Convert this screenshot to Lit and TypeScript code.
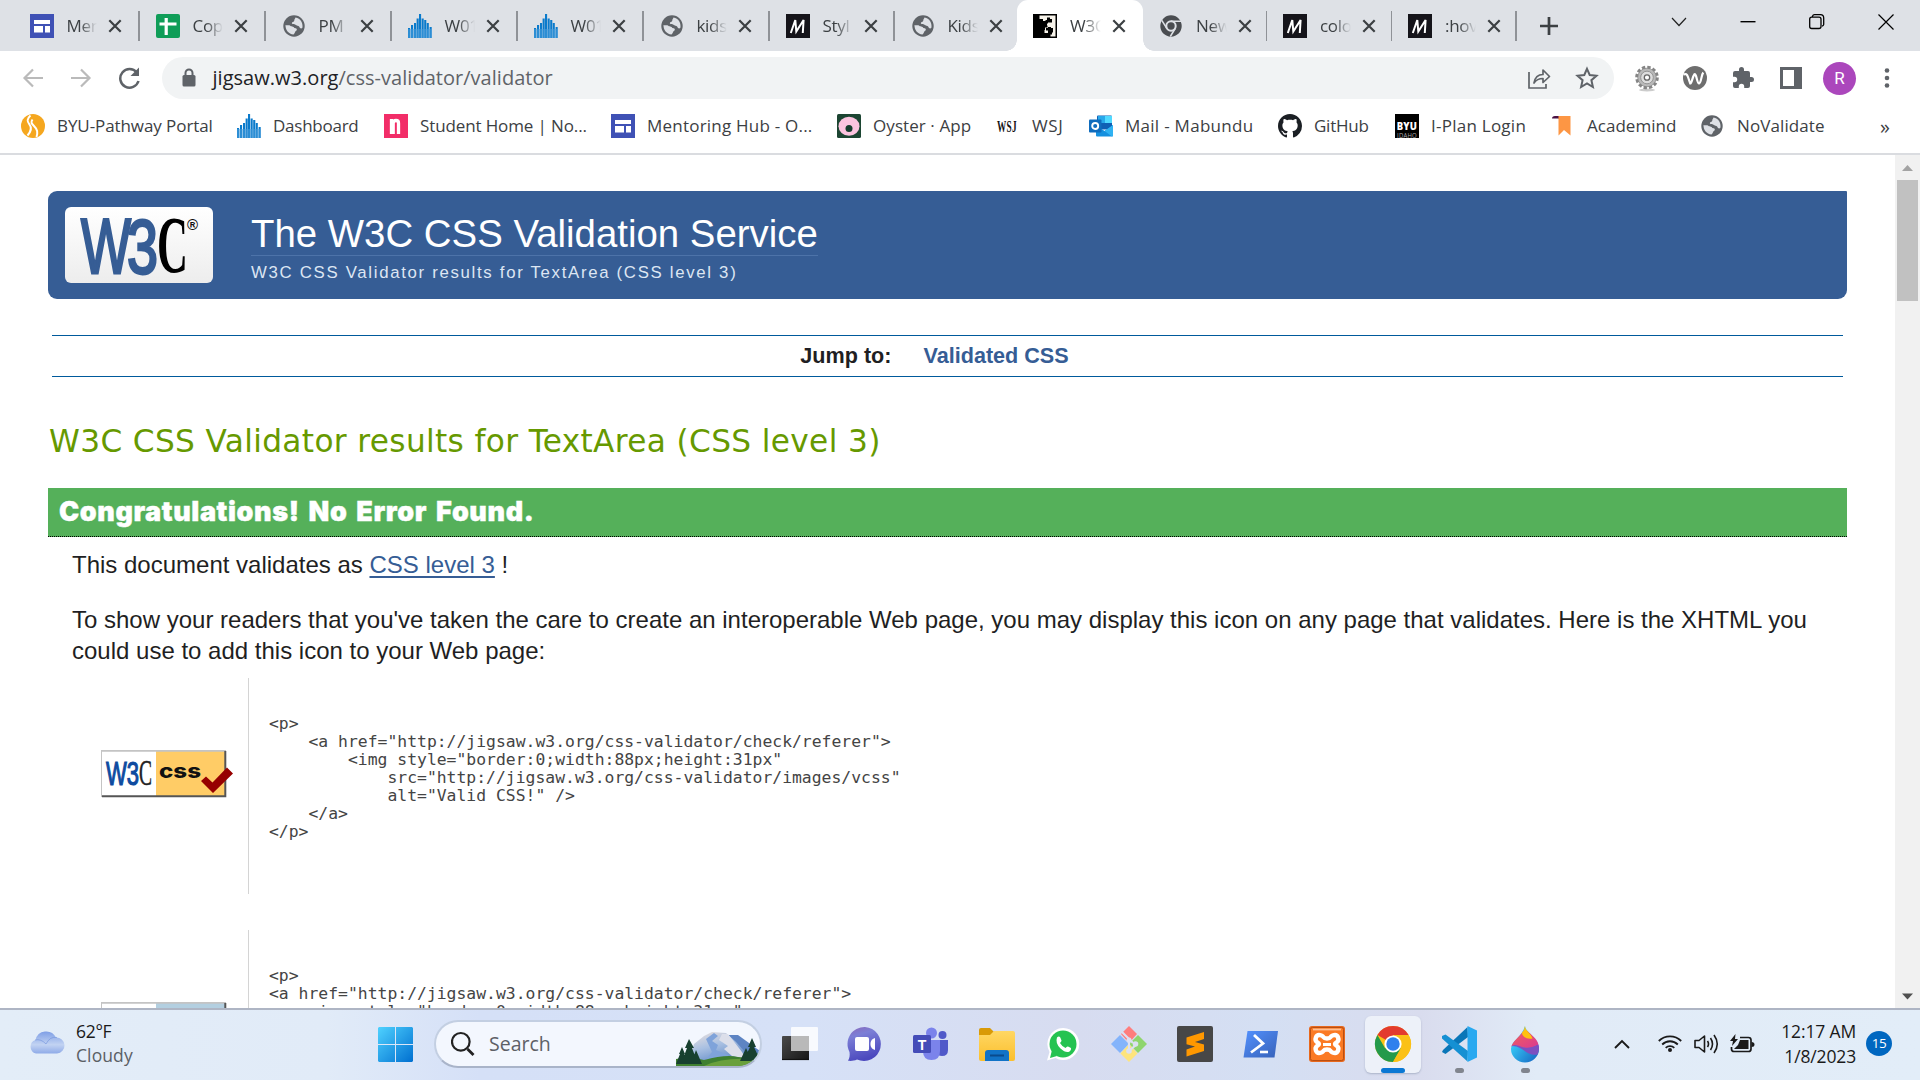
import { LitElement, html, svg, css, nothing } from "lit";
import { customElement, property } from "lit/decorators.js";

/* ---------- favicons, 24 x 24 ---------- */
const globe = svg`<circle cx="12" cy="12" r="10.700" fill="#5f6368"/><path d="M3.500 11C5 12 6 10.500 8 11.500C9 12.800 11.500 12 12.300 14C14.500 14 15.500 15 14.500 16.500C12.500 17.300 13.500 19 11.500 20.500C6.500 20 3.300 16 3.500 11Z" fill="#dee1e6"/><path d="M13.500 3.500C18.500 4.500 21 8.500 20.500 13.500C19.300 15.300 18 14.500 17.300 12.800C16.500 11.300 14.500 12 13.500 10.800C12.500 9.800 10.300 10.800 9.800 9.300C10 7.500 12 8.300 12.300 6.800C12 5.500 13 5 13.500 3.500Z" fill="#dee1e6"/>`;
const bars = svg`${[[0, 14], [3, 11], [6, 9], [8.600, 4.500], [11, 0], [13.600, 4.500], [16.200, 6], [18.700, 9], [21.600, 13]].map(
  ([x, y]) => svg`<rect x=${x} y=${y} width="2.100" height=${24 - y} fill="#0a7acb"/>`)}<rect x="0" y="15" width="24" height="9" fill="#4a9fdc" opacity=".55"/>`;
const siteIcon = svg`<rect width="24" height="24" fill="#3f51b5"/><rect x="4" y="6" width="16" height="4" fill="#fff"/><rect x="4" y="12" width="9" height="6.500" fill="#fff"/><rect x="15" y="12" width="5" height="6.500" fill="#fff"/>`;
const mdn = svg`<rect width="24" height="24" fill="#15141a"/><path d="M4.800 19L9.300 6L10.300 17.500L17.600 6L16.800 19" fill="none" stroke="#fff" stroke-width="2"/>`;

const icons: Record<string, unknown> = {
  globe, bars, mdn, site: siteIcon,
  sheet: svg`<rect width="24" height="24" rx="2" fill="#0f9d58"/><path d="M10.200 4v17M3.500 10h17" stroke="#fff" stroke-width="3.200"/>`,
  jigsaw: svg`<rect width="24" height="24" fill="#000"/><path d="M6.500 1.500H22.500V22.500H17.500V20.500H19V18.500H20V14H18V13H15V14H13V16.500H15V19H11.500V16H12V13.500H14.500V11.500H14V9.500H15V8.500H19V5H17V3.500H14V6H12.500V7H10V5H6.500Z" fill="#f7f3ea"/>`,
  chromeGrey: svg`<circle cx="12" cy="12" r="10.700" fill="#4a4d51"/><circle cx="12" cy="12" r="5.700" fill="#dee1e6"/><circle cx="12" cy="12" r="3.700" fill="#4a4d51"/><path d="M12 7.200H22M7.900 14.500L2.800 6.300M16.200 14.500L11.300 22.500" stroke="#dee1e6" stroke-width="1.500"/>`,
  pathway: svg`<circle cx="12" cy="12" r="12" fill="#f5a71f"/><path d="M9.500 1.500C5.500 5 6 7.500 8.500 10.500C11 13.800 10.500 17 6.500 21.500M11.500 5.500C9.500 8.500 10.500 9.500 13 12C16.500 15.500 17 18 15.500 23" fill="none" stroke="#fff" stroke-width="2"/>`,
  n: svg`<rect width="24" height="24" fill="#f22d68"/><path d="M7.500 20V5M14.500 20V9Q14.500 6.500 12 6.500Q9.500 6.500 9.200 9V20" fill="none" stroke="#fff" stroke-width="3.300"/>`,
  oyster: svg`<rect width="24" height="24" rx="1.500" fill="#1c4532"/><ellipse cx="12" cy="12.200" rx="10.500" ry="9.500" fill="#fbc4df"/><circle cx="12" cy="14.500" r="3.500" fill="#143c2c"/>`,
  wsj: svg`<text x="0" y="18" font-family="Liberation Serif" font-weight="700" font-size="17" textLength="20" lengthAdjust="spacingAndGlyphs" fill="#111">WSJ</text>`,
  outlook: svg`<rect x="8" y="1.500" width="15" height="14" rx="1" fill="#0f5fb4"/><rect x="9" y="2" width="7" height="7" fill="#28a8ea"/><rect x="16" y="2" width="7" height="7" fill="#50d9ff"/><path d="M7 11L15.500 17L24 11V21.500Q24 22.500 23 22.500H8Q7 22.500 7 21.500Z" fill="#1490df"/><path d="M24 11V21.500Q24 22.500 23 22.500L15.500 17Z" fill="#2fb2f2"/><rect x="0" y="5.500" width="12.500" height="13" rx="1" fill="#0f6cbd"/><circle cx="6.200" cy="12" r="3" fill="none" stroke="#fff" stroke-width="1.900"/>`,
  github: svg`<path transform="scale(1.500)" fill="#1b1f24" d="M8 0C3.580 0 0 3.580 0 8c0 3.540 2.290 6.530 5.470 7.590.4.070.55-.17.55-.38 0-.19-.01-.82-.01-1.490-2.010.37-2.530-.49-2.690-.94-.09-.23-.48-.94-.82-1.130-.28-.15-.68-.52-.01-.53.63-.01 1.080.58 1.230.82.72 1.210 1.870.87 2.330.66.070-.52.28-.87.51-1.070-1.780-.2-3.640-.89-3.640-3.950 0-.87.31-1.590.82-2.150-.08-.2-.36-1.020.08-2.120 0 0 .67-.21 2.200.82.64-.18 1.320-.27 2-.27s1.360.09 2 .27c1.530-1.040 2.200-.82 2.200-.82.44 1.100.16 1.920.08 2.120.51.56.82 1.270.82 2.150 0 3.070-1.870 3.750-3.650 3.950.29.25.54.73.54 1.480 0 1.070-.01 1.930-.01 2.200 0 .21.15.46.55.38A8.010 8.010 0 0 0 16 8c0-4.420-3.580-8-8-8z"/>`,
  byu: svg`<rect width="24" height="24" fill="#000"/><text x="1.700" y="15.500" font-family="Open Sans" font-weight="800" font-size="10.500" textLength="20.500" lengthAdjust="spacingAndGlyphs" fill="#fff">BYU</text><text x="2" y="24" font-family="Open Sans" font-size="7" textLength="20" lengthAdjust="spacingAndGlyphs" fill="#aaa">IDAHO</text>`,
  academind: svg`<path d="M5 2H18.500V21.500L12 16L6.500 21.500V5Z" fill="#fd9644"/><path d="M0 4.500Q0 2 3 2H6.500V4.500Z" fill="#4a1245"/>`,
};

interface Tab { icon: string; label: string; width: number; active?: boolean; noSep?: boolean; }
const tabs: Tab[] = [
  { icon: "site", label: "Men", width: 126 }, { icon: "sheet", label: "Cop", width: 126 }, { icon: "globe", label: "PM", width: 126 },
  { icon: "bars", label: "W01", width: 126 }, { icon: "bars", label: "W01", width: 126 }, { icon: "globe", label: "kids", width: 126 },
  { icon: "mdn", label: "Styl", width: 125 }, { icon: "globe", label: "Kids", width: 122.5, noSep: true }, { icon: "jigsaw", label: "W3C", width: 126, active: true },
  { icon: "chromeGrey", label: "New", width: 124 }, { icon: "mdn", label: "colo", width: 125 }, { icon: "mdn", label: ":hov", width: 124.5 },
];

/* label, icon, width of the whole entry up to the next icon, letter spacing, icon gap */
const bookmarks: [string, string, number, number, number][] = [
  ["BYU-Pathway Portal", "pathway", 216, -0.08, 12], ["Dashboard", "bars", 147, -0.25, 12], ["Student Home | No...", "n", 227, -0.12, 12],
  ["Mentoring Hub - O...", "site", 226, 0.22, 12], ["Oyster · App", "oyster", 160, 0.08, 12], ["WSJ", "wsj", 92, 0.6, 11],
  ["Mail - Mabundu", "outlook", 189, 0.28, 12], ["GitHub", "github", 117, -0.25, 12], ["I-Plan Login", "byu", 157, 0.25, 12],
  ["Academind", "academind", 148, 0.02, 11], ["NoValidate", "globe", 170, 0.1, 13],
];

@customElement("ui-icon")
class UiIcon extends LitElement {
  @property() name = "";
  static styles = css`:host{display:block;width:24px;height:24px;flex:none} svg{display:block;overflow:visible}`;
  render() { return html`<svg width="24" height="24" viewBox="0 0 24 24">${icons[this.name]}</svg>`; }
}

@customElement("browser-chrome")
class BrowserChrome extends LitElement {
  static styles = css`
    :host{display:block;font-family:"Open Sans","Noto Sans",sans-serif;font-size:17px;color:#3c4043}
    .strip{display:flex;height:51px;background:#dee1e6;padding-left:13.300px;box-sizing:border-box}
    .tab{box-sizing:border-box;display:flex;align-items:center;padding-left:16.700px;position:relative;flex:none}
    .tab::after{content:"";width:1.500px;height:30px;background:#8f9297;position:absolute;right:-.5px;top:11px}
    .tab.bare::after{display:none}
    .tab.active{background:#fff;border-radius:11px 11px 0 0}
    .tab.active::after{display:block;width:11px;height:11px;background:radial-gradient(circle at 100% 0,transparent 10.500px,#fff 11px);right:-11px;top:40px}
    .tab.active::before{content:"";position:absolute;width:11px;height:11px;left:-11px;top:40px;background:radial-gradient(circle at 0 0,transparent 10.500px,#fff 11px)}
    .label{margin-left:12.500px;width:31px;overflow:hidden;white-space:nowrap;line-height:26px;letter-spacing:-.3px;-webkit-mask-image:linear-gradient(90deg,#000 45%,transparent 100%)}
    .x{display:block;margin-left:11px;flex:none}
    .plus{display:block;margin:17px 0 0 24px}
    .win{margin-left:auto;display:flex;padding:13px 25.500px 0 0}
    .win svg{display:block;width:18px;height:18px;margin-left:51px}
    .bar{display:flex;height:54px;align-items:center;background:#fff;padding-left:20px}
    .nav{display:block;flex:none}
    .omni{flex:none;margin-left:20px;width:1452px;height:42px;border-radius:21px;background:#f1f3f4;display:flex;align-items:center;box-sizing:border-box;padding:0 15px 0 19px}
    .url{margin-left:15.500px;font-size:20px;color:#5f6368;line-height:30px;letter-spacing:.03px;flex:1}
    .url b{font-weight:400;color:#202124}
    .star{margin-left:24px}
    .ext{display:flex;align-items:center;padding-left:20px}
    .ext svg{display:block;flex:none}
    .ext .gap{margin-left:24px}
    .ext .wide{margin-left:25px}
    .ext .tight{margin-left:23px}
    .avatar{width:33px;height:33px;border-radius:50%;background:#ab47bc;color:#fff;display:grid;place-items:center;font:17px/33px Roboto,sans-serif;margin:0 28px 0 21px}
    .marks{display:flex;height:42px;padding:0 0 6px 21px;align-items:center;background:#fff;border-bottom:2px solid #dadce0}
    .mark{display:flex;align-items:center;flex:none}
    .mark span{white-space:nowrap;line-height:26px}
    .more{margin-left:10px;font-size:20px}
  `;
  render() {
    return html`
      <div class="strip">
        ${tabs.map((t) => html`<div class="tab ${t.active ? "active" : ""} ${t.noSep || t.active ? "bare" : ""}" style="width:${t.width}px">
          <ui-icon name=${t.icon}></ui-icon><span class="label">${t.label}</span>
          <svg class="x" width="14" height="14" viewBox="0 0 14 14"><path d="M1.300 1.300L12.700 12.700M12.700 1.300L1.300 12.700" stroke="#3c4043" stroke-width="2.200"/></svg>
        </div>`)}
        <svg class="plus" width="18" height="18" viewBox="0 0 18 18"><path d="M9 0V18M0 9H18" stroke="#3c4043" stroke-width="2.700"/></svg>
        <div class="win">
          <svg viewBox="0 0 18 18"><path d="M2 5L9 12.500L16 5" fill="none" stroke="#222" stroke-width="1.200"/></svg>
          <svg viewBox="0 0 18 18"><path d="M1.500 8.700H16.500" stroke="#000" stroke-width="1.400"/></svg>
          <svg viewBox="0 0 18 18"><rect x="1.700" y="4.200" width="11.300" height="11.300" rx="2" fill="none" stroke="#000" stroke-width="1.300"/><path d="M4.500 4V3.200Q5 1.700 6.500 1.700H12.500Q15.700 1.700 15.700 5V11.500Q15.500 13 14 13" fill="none" stroke="#000" stroke-width="1.300"/></svg>
          <svg viewBox="0 0 18 18"><path d="M1.500 1.500L16.500 16.500M16.500 1.500L1.500 16.500" stroke="#000" stroke-width="1.200"/></svg>
        </div>
      </div>
      <div class="bar">
        <svg class="nav" width="122" height="24" viewBox="0 0 122 24" fill="none" stroke="#bababa" stroke-width="2.200">
          <path d="M23 12H5M13 3.500L4.500 12L13 20.500M51 12H69M61 3.500L69.500 12L61 20.500"/>
          <path d="M116.800 6.500A9.300 9.300 0 1 0 118.500 15" stroke="#5f6368" stroke-width="2.500"/><path d="M119 1.500V10H110.500Z" fill="#5f6368" stroke="none"/>
        </svg>
        <div class="omni">
          <svg width="16" height="20" viewBox="0 0 16 20"><rect x="1.500" y="7" width="13" height="11.500" rx="1.500" fill="#5f6368"/><path d="M4.500 8V5a3.500 3.500 0 0 1 7 0V8" fill="none" stroke="#5f6368" stroke-width="2"/></svg>
          <span class="url"><b>jigsaw.w3.org</b>/css-validator/validator</span>
          <svg width="24" height="24" viewBox="0 0 24 24" fill="none" stroke="#5f6368" stroke-width="1.700"><path d="M2 6V22H19V18"/><path d="M7 17C8 11 11.500 8.500 16 8.500V4L22.500 10.500L16 16.500V12.500C12 12.500 9 14 7 17Z" stroke-linejoin="round"/></svg>
          <svg class="star" width="24" height="24" viewBox="0 0 24 24"><path d="M12 2.800L14.700 9L21.500 9.700L16.400 14.200L17.900 21L12 17.500L6.100 21L7.600 14.200L2.500 9.700L9.300 9Z" fill="none" stroke="#5f6368" stroke-width="2"/></svg>
        </div>
        <div class="ext">
          <svg width="26" height="30" viewBox="0 0 26 30"><ellipse cx="13" cy="27" rx="8" ry="1.500" fill="#ccc"/><circle cx="13" cy="14.500" r="10.300" fill="none" stroke="#858585" stroke-width="3" stroke-dasharray="3.300 2.090"/><circle cx="13" cy="14.500" r="9.300" fill="#b9b9b9" stroke="#808080" stroke-width=".7"/><circle cx="13" cy="14.500" r="6.300" fill="#ddd" stroke="#888" stroke-width=".8"/><circle cx="13" cy="14.500" r="2.700" fill="#fff" stroke="#666" stroke-width="1.300"/></svg>
          <svg class="tight" width="24" height="24" viewBox="0 0 24 24"><circle cx="12" cy="12" r="12" fill="#6e6e6e"/><path d="M.5 8.500C3 7.500 4 8 5 11L7.200 17.500C9 17.500 9.200 11 11.500 8.200C13.500 7.500 14 17.500 16 17.500C18.500 16.500 18.200 8.800 20.300 6.500" fill="none" stroke="#fff" stroke-width="2.200"/></svg>
          <svg class="gap" width="24" height="24" viewBox="0 0 24 24"><path fill="#5f6368" d="M20.500 11H19V7a2 2 0 0 0-2-2h-4V3.500a2.500 2.500 0 0 0-5 0V5H4a2 2 0 0 0-2 2v3.800h1.500a2.700 2.700 0 0 1 0 5.400H2V20a2 2 0 0 0 2 2h3.800v-1.500a2.700 2.700 0 0 1 5.400 0V22H17a2 2 0 0 0 2-2v-4h1.500a2.500 2.500 0 0 0 0-5z"/></svg>
          <svg class="wide" width="22" height="22" viewBox="0 0 22 22"><rect x="1.500" y="1.500" width="19" height="19" fill="#fff" stroke="#5f6368" stroke-width="3"/><rect x="14" y="0" width="8" height="22" fill="#5f6368"/></svg>
          <div class="avatar">R</div>
          <svg width="6" height="20" viewBox="0 0 6 20" fill="#5f6368"><circle cx="3" cy="2.500" r="2.300"/><circle cx="3" cy="10" r="2.300"/><circle cx="3" cy="17.500" r="2.300"/></svg>
        </div>
      </div>
      <div class="marks">
        ${bookmarks.map(([label, icon, w, ls, gap]) => html`<div class="mark" style="width:${w}px;letter-spacing:${ls}px;gap:${gap}px"><ui-icon name=${icon}></ui-icon><span>${label}</span></div>`)}
        <span class="more">»</span>
      </div>`;
  }
}

const snippet1 = `<p>
    <a href="http://jigsaw.w3.org/css-validator/check/referer">
        <img style="border:0;width:88px;height:31px"
            src="http://jigsaw.w3.org/css-validator/images/vcss"
            alt="Valid CSS!" />
    </a>
</p>`;
const snippet2 = `<p>
<a href="http://jigsaw.w3.org/css-validator/check/referer">
    <img style="border:0;width:88px;height:31px"`;

const plate = (fill: string) => svg`<rect x="0" y="0" width="125" height="47" fill="#fff"/><rect x="55" y="1" width="69" height="45" fill=${fill}/>
  <path d="M0 47V.7H125" fill="none" stroke="#c4c4c4" stroke-width="2"/><path d="M1 46.300H124.300V1" fill="none" stroke="#555" stroke-width="2"/>`;
const badge = () => html`<svg width="133" height="48" viewBox="0 0 133 48">${plate("#ffcc66")}
  <g font-family="Liberation Sans" font-size="34" stroke-width="1.200"><text x="5" y="35" fill="#0e4ba0" stroke="#0e4ba0" textLength="33" lengthAdjust="spacingAndGlyphs">W3</text><text x="38" y="35" fill="#222" stroke="#222" stroke-width=".5" font-family="Liberation Serif" font-size="36" textLength="13" lengthAdjust="spacingAndGlyphs">C</text></g>
  <text x="58" y="28" font-family="Inter" font-weight="800" font-size="20" textLength="42" lengthAdjust="spacingAndGlyphs" fill="#111">css</text>
  <path d="M100 31L105 26.500L111.500 32.500L126 17.500L132 23.500L112 43Z" fill="#960000"/></svg>`;
const badgeTop = () => html`<svg width="133" height="48" viewBox="0 0 133 48">${plate("#b3cfe0")}</svg>`;

@customElement("validator-page")
class ValidatorPage extends LitElement {
  static styles = css`
    :host{display:block;height:853px;overflow:hidden;background:#fff;font-family:"Liberation Sans",Arial,sans-serif;color:#1f1f23}
    .view{display:flex;height:853px}
    .doc{flex:1;padding:36px 48px 0;overflow:hidden;box-sizing:border-box}
    .banner{height:108px;background:#365d95;border-radius:9px 1px 9px 9px;display:flex;box-sizing:border-box;padding:16px 0 0 16.500px}
    .logo{width:148.500px;height:76px;border-radius:6px;background:linear-gradient(#fff,#ededed);flex:none}
    .logo svg{display:block}
    .heads{margin-left:38px;padding-top:2px}
    .title{font-size:38.400px;line-height:50px;color:#fff;border-bottom:1px solid #4d73a9;height:46px;white-space:nowrap}
    .sub{font-size:16.800px;line-height:20px;margin-top:7px;color:#dde6f3;letter-spacing:1.690px;white-space:nowrap}
    .jump{margin:36px 4px 0;height:42px;box-sizing:border-box;border-top:1px solid #005a9c;border-bottom:1px solid #005a9c;display:flex;justify-content:center;gap:32px;font-weight:700;font-size:21.600px;line-height:39px;padding-right:26px}
    .jump a{color:#365d95}
    h2{margin:44px 0 0 1px;height:67px;font:400 31.200px/40px "DejaVu Sans",sans-serif;color:#690;white-space:nowrap;letter-spacing:.35px}
    .ok{height:49px;box-sizing:border-box;background:#55b05a;border-bottom:1px dotted #000;color:#fff;font:900 27px/48px Inter,sans-serif;letter-spacing:.6px;word-spacing:3px;padding-left:11px;-webkit-text-stroke:.4px #fff}
    p{margin:12px 24px 0;font-size:24px;line-height:31px}
    p + p{margin-top:24px}
    p a{color:#365d95;text-decoration:underline;text-decoration-thickness:2px;text-underline-offset:3px}
    .row{display:flex;margin-top:12px;height:216px}
    .row + .row{margin-top:36px}
    .pic{width:147px;padding:72px 0 0 53px;flex:none}
    .pic svg{display:block}
    pre{margin:0;border-left:1px solid #d4d4d4;padding:37px 0 0 20px;font:16.400px/18px "DejaVu Sans Mono",monospace;color:#444;box-sizing:border-box}
    .scroll{width:25px;background:#f1f1f1;display:flex;flex-direction:column;align-items:center}
    .thumb{width:21px;height:121px;background:#c1c1c1;margin-bottom:auto}
    .scroll svg{display:block}
  `;
  render() {
    return html`<div class="view"><div class="doc">
      <div class="banner">
        <div class="logo"><svg width="149" height="76" viewBox="0 0 149 76">
          <text x="16" y="66" font-family="Liberation Sans" font-size="78" fill="#365d95" stroke="#365d95" stroke-width="2.800" textLength="50" lengthAdjust="spacingAndGlyphs">W</text>
          <text x="62" y="65.500" font-family="Liberation Sans" font-size="76" fill="#365d95" stroke="#365d95" stroke-width="2.800" textLength="31" lengthAdjust="spacingAndGlyphs">3</text>
          <text x="92" y="65" font-family="Liberation Serif" font-weight="700" font-size="80" textLength="31" lengthAdjust="spacingAndGlyphs" fill="#000">C</text>
          <text x="122" y="23" font-size="15" font-weight="700" fill="#111" font-family="Liberation Sans">®</text></svg></div>
        <div class="heads"><div class="title">The W3C CSS Validation Service</div><div class="sub">W3C CSS Validator results for TextArea (CSS level 3)</div></div>
      </div>
      <div class="jump"><span>Jump to:</span><a>Validated CSS</a></div>
      <h2>W3C CSS Validator results for TextArea (CSS level 3)</h2>
      <div class="ok">Congratulations! No Error Found.</div>
      <p>This document validates as <a>CSS level 3</a> !</p>
      <p>To show your readers that you've taken the care to create an interoperable Web page, you may display this icon on any page that validates. Here is the XHTML you could use to add this icon to your Web page:</p>
      <div class="row"><div class="pic">${badge()}</div><pre>${snippet1}</pre></div>
      <div class="row"><div class="pic">${badgeTop()}</div><pre>${snippet2}</pre></div>
    </div>
    <div class="scroll">
      <svg width="25" height="25" viewBox="0 0 25 25"><path d="M7 16L12.500 10L18 16Z" fill="#a3a3a3"/></svg>
      <div class="thumb"></div>
      <svg width="25" height="25" viewBox="0 0 25 25"><path d="M7 10.500L12.500 16.500L18 10.500Z" fill="#505050"/></svg>
    </div></div>`;
  }
}

/* ---------- taskbar application icons, 36 x 36 ---------- */
const apps: { art: unknown; state?: "open" | "front" }[] = [
  { art: svg`<rect x="1" y="10" width="27" height="24" rx="1" fill="url(#tv)"/><path d="M1 33.500H28" stroke="#111" stroke-width="1.200"/><rect x="10" y="1" width="27" height="24" rx="1" fill="#fff" opacity=".82"/><rect x="10" y="10" width="18" height="15" fill="#b9b9b9"/>` },
  { art: svg`<path d="M18 1A17 17 0 1 1 10 33.500C7 35 4 35 1 34.800C2.500 32 3 29.500 2.500 26A17 17 0 0 1 18 1Z" fill="url(#chat)"/><rect x="8" y="11" width="14" height="14" rx="2" fill="#fff"/><path d="M23.500 17Q24 13 28 12V24Q24 23 23.500 19Z" fill="#fff"/>` },
  { art: svg`<circle cx="18.500" cy="7" r="5.500" fill="#7b83eb"/><circle cx="29.500" cy="9" r="4" fill="#5059c9"/><path d="M23 14H35V24Q35 30 29 30Q25 30 23 27Z" fill="#5059c9"/><path d="M10 14H27V25Q27 34 18.500 34Q10 34 10 25Z" fill="#7b83eb"/><rect x="0" y="9" width="18" height="18" rx="1.500" fill="#444cb8"/><text x="9" y="23.500" text-anchor="middle" font-family="Liberation Sans" font-weight="700" font-size="14" fill="#fff">T</text>` },
  { art: svg`<path d="M0 4Q0 2 2 2H11L15 6V12H0Z" fill="#d99a07"/><path d="M0 9H11L15 5H34Q36 5 36 7V33Q36 35 34 35H2Q0 35 0 33Z" fill="url(#folder)"/><path d="M6 35V27Q6 24 9 24H27Q30 24 30 27V35Z" fill="#1173c7"/><path d="M11 29.500H25" stroke="#0a4b8c" stroke-width="2"/>` },
  { art: svg`<path d="M18 2A16 16 0 1 1 10.500 32L2 34.500L4.500 26A16 16 0 0 1 18 2Z" fill="#fff"/><circle cx="18" cy="18" r="13.500" fill="#25c351"/><path d="M5 32L7 24L12 30Z" fill="#25c351"/><path d="M12 11.500Q14 9.500 15.300 11.500L16.500 14.500Q16.500 15.500 15 17Q17 20.500 20.500 22Q22 20 23 20.500L26 22Q26.500 24 24.500 25.500Q21 27.500 15.500 22.500Q10 17 12 11.500Z" fill="#fff"/>` },
  { art: svg`<path d="M18 0L26 8L18 17L10 8Z" fill="#ff7d7d"/><path d="M9 9L18 18L9 27L0 18Z" fill="#84b4fb"/><path d="M27 9L36 18L27 27L18 18Z" fill="#8fd56e"/><path d="M18 18L26.500 27.500L18 36L9.500 27.500Z" fill="#fde47d"/><path d="M11 6L22 17M18 13V25M18 25L26 18" stroke="#dce0f3" stroke-width="2.200"/><circle cx="18" cy="25" r="2.800" fill="#dce0f3"/><circle cx="24.500" cy="18" r="2.800" fill="#dce0f3"/><circle cx="18" cy="14" r="2.500" fill="#dce0f3"/>` },
  { art: svg`<rect width="36" height="36" rx="2" fill="#474747"/><path d="M27 6V13L18 16L27 18.500V25L9.500 30.500V23.500L18 20.500L9.500 18.200V11.500Z" fill="#ff9800"/>` },
  { art: svg`<path d="M4.500 5H35L31.500 31.500H.5Z" fill="url(#ps)"/><path d="M11 9L20 17.500L8 26.500" fill="none" stroke="#fff" stroke-width="2.800"/><path d="M17 26H25" stroke="#fff" stroke-width="2.600"/>` },
  { art: svg`<rect width="36" height="36" rx="3" fill="#e8681c"/><rect x="1.500" y="1.500" width="33" height="33" rx="2" fill="#fb7a24" stroke="#b94f12"/><path d="M4 3.500H32" stroke="#ffc093" stroke-width="1.800"/><path d="M12.500 9.500C6.500 7.500 5 14 8.500 16.500C10.500 17.500 10.500 18.500 8.500 19.500C5 22 6.500 28.500 12.500 26.500C15.500 25.500 13.500 23.500 18 23.500C22.500 23.500 20.500 25.500 23.500 26.500C29.500 28.500 31 22 27.500 19.500C25.500 18.500 25.500 17.500 27.500 16.500C31 14 29.500 7.500 23.500 9.500C20.500 10.500 22.500 12.500 18 12.500C13.500 12.500 15.500 10.500 12.500 9.500Z" fill="none" stroke="#fff" stroke-width="4.400"/><path d="M14 18.500H22" stroke="#fff" stroke-width="3"/>` },
  { state: "front", art: svg`<circle cx="18" cy="18" r="18" fill="#fbc116"/><path d="M18 18L2.400 9A18 18 0 0 1 33.600 9H18Z" fill="#e33b2e"/><path d="M2.400 9A18 18 0 0 0 18 36L25.800 22.500L18 18L10.200 22.500Z" fill="#249a4b"/><path d="M18 9H33.600A18 18 0 0 1 18 36L25.800 22.500Z" fill="#fbc116"/><circle cx="18" cy="18" r="8.600" fill="#fff"/><circle cx="18" cy="18" r="6.700" fill="#2f80ed"/>` },
  { state: "open", art: svg`<path d="M2 24L26.500 1L27 11L4.500 28L1 26Z" fill="#0a76b8"/><path d="M4.500 8.500L27 25L26.500 35.500L1 12.500V10Z" fill="#1590d3"/><path d="M26.500 0L36 4.500V31.500L26.500 36Z" fill="#29a9f0"/>` },
  { state: "open", art: svg`<path d="M18 0C18 6 32 12 32 23A14 13.500 0 0 1 4 23C4 15 15 11 18 0Z" fill="url(#drop)"/><path d="M15.500 6C12.500 11 6 15 4.400 20.500C12 16 17 28 31.500 18.500C29.500 11.500 24 9 20.500 5Z" fill="url(#pink)"/><path d="M4.600 20C12 15.500 15 27 31.400 18.500Q33 23 30.500 28.500C20 31 16 19.500 4.600 20Z" fill="#7d4fc0"/><path d="M18 0C18 4.500 24 7.500 25.500 12.500C20 13.500 15 11 15 6.800Q17.500 4 18 0Z" fill="#ffc20e"/>` },
];

@customElement("task-bar")
class TaskBar extends LitElement {
  static styles = css`
    :host{display:block;font-family:"Open Sans","Noto Sans",sans-serif;color:#1a1a1a}
    .bar{height:72px;box-sizing:border-box;border-top:2px solid #aeb5c4;display:flex;background:linear-gradient(90deg,#e3edf8 0,#e1ebf8 17%,#d5e0f7 25%,#d6e1f7 42%,#d7dcf0 56%,#d4dff3 66%,#d9dcee 74%,#e1ebf7 80%,#e2edf8 100%)}
    .weather{width:349px;padding:9px 0 0 29px;display:flex;flex:none}
    .weather svg{display:block;margin-top:11px}
    .wt{margin-left:11px;font-size:17.500px;line-height:24px;letter-spacing:-.3px}
    .wt div + div{color:#5b6065;letter-spacing:.1px}
    .start{display:block;margin-top:17px;flex:none}
    .search{margin:10px 0 0 21px;width:328px;height:48px;box-sizing:border-box;border:2px solid #c3cfe2;border-bottom-color:#a9b4c9;border-radius:24px;background:#f3f7fe;display:flex;align-items:center;padding-left:15px;flex:none;overflow:hidden}
    .search span{margin-left:14px;font-size:19.500px;color:#5d6066;line-height:26px;letter-spacing:0}
    .land{display:block;margin-left:auto}
    .apps{display:flex;margin-left:4px}
    .app{width:66px;display:flex;flex-direction:column;align-items:center;padding-top:6px;box-sizing:border-box}
    .tile{width:56px;height:57px;border-radius:6px;display:flex;flex-direction:column;align-items:center;justify-content:space-between;box-sizing:border-box;padding-top:10px}
    .front .tile{background:#edf1f9;box-shadow:0 1px 2px #aab3c8}
    .tile svg{display:block;overflow:visible}
    .dot{width:9px;height:5px;border-radius:3px;background:#81858e}
    .front .dot{width:24px;background:#0a78d4}
    .tray{margin-left:auto;display:flex;align-items:center;padding:0 28px 3px 0}
    .tray svg{display:block}
    .tray .wifi{margin-left:28px}
    .tray .vol{margin-left:12px}
    .tray .bat{margin-left:11px}
    .clock{width:101px;text-align:right;font-size:17.500px;line-height:24.500px;letter-spacing:-.15px;white-space:nowrap}
    .count{margin-left:10px;width:26px;height:25px;border-radius:50%;background:#0067c0;color:#fff;font-size:13.500px;line-height:24px;text-align:center;letter-spacing:-.4px}
  `;
  render() {
    return html`<div class="bar">
      <div class="weather">
        <svg width="36" height="25" viewBox="0 0 36 25"><defs><linearGradient id="cl" x1="0" y1="0" x2="0" y2="1"><stop offset="0" stop-color="#7f9fe6"/><stop offset=".6" stop-color="#c2d3f2"/><stop offset="1" stop-color="#8fabe8"/></linearGradient></defs><path d="M7 23.500A7 7 0 0 1 6.500 10A11 11 0 0 1 27 7.500A8 8 0 0 1 28 23.500Z" fill="url(#cl)"/><path d="M6 10Q12 8.500 17 14Q21 6 28 7.500" fill="none" stroke="#7292dc" opacity=".6"/></svg>
        <div class="wt"><div>62°F</div><div>Cloudy</div></div>
      </div>
      <svg class="start" width="35" height="35" viewBox="0 0 35 35"><defs><linearGradient id="w" x1="0" y1="0" x2="1" y2="1"><stop offset="0" stop-color="#4fd2ff"/><stop offset="1" stop-color="#006fd0"/></linearGradient></defs><path d="M1 0H17V17H0V1ZM18 0H34L35 1V17H18ZM0 18H17V35H1L0 34ZM18 18H35V34L34 35H18Z" fill="url(#w)"/></svg>
      <div class="search">
        <svg width="24" height="26" viewBox="0 0 24 26"><circle cx="9.800" cy="10.800" r="8.800" fill="none" stroke="#222" stroke-width="2.200"/><path d="M16.500 18L22.500 24" stroke="#222" stroke-width="2.800"/></svg>
        <span>Search</span>
        <svg class="land" width="84" height="44" viewBox="0 0 84 44">
          <defs><linearGradient id="mt" x1="0" y1="0" x2=".6" y2="1"><stop offset="0" stop-color="#f0e4de"/><stop offset=".5" stop-color="#a9c0e2"/><stop offset="1" stop-color="#5e88c6"/></linearGradient></defs>
          <path d="M50 13L62 13L84 29V40H40Z" fill="#5d84c3"/><path d="M12 40L18 22L28 14L36 10L50 11L60 20L78 40Z" fill="url(#mt)"/>
          <path d="M30 17L38 11L42 14L36 19L42 23L40 28L52 33L58 40H28L36 30Z" fill="#7fa3da"/><path d="M46 12L52 12L66 30L70 37L56 34L48 27L52 24L43 18Z" fill="#dcdfea"/>
          <path d="M0 37Q14 34 28 38Q50 32 62 35Q74 37 84 30V44H0Z" fill="#3f8030"/><path d="M28 44Q50 34 84 38V44Z" fill="#69a03b"/>
          <path d="M6 25L3 32H4L0 42H12L8 32H9ZM13 17L9 26H11L5 42H22L16 26H18ZM20 28L15 42H26ZM76 16L72 25H74L68 38H84L78 25H80ZM70 26L64 39H76Z" fill="#17402f"/></svg>
      </div>
      <div class="apps">${apps.map((a) => html`<div class="app ${a.state ?? ""}"><div class="tile">
        <svg width="36" height="36" viewBox="0 0 36 36"><defs>
          <linearGradient id="tv" x1="0" y1="0" x2="1" y2="1"><stop offset="0" stop-color="#4a4a4a"/><stop offset="1" stop-color="#161616"/></linearGradient>
          <linearGradient id="chat" x1="0" y1="0" x2=".3" y2="1"><stop offset="0" stop-color="#8a67b8"/><stop offset=".3" stop-color="#7c7fd6"/><stop offset="1" stop-color="#4c49be"/></linearGradient>
          <linearGradient id="folder" x1="0" y1="0" x2="0" y2="1"><stop offset="0" stop-color="#ffd764"/><stop offset="1" stop-color="#fbbf2d"/></linearGradient>
          <linearGradient id="ps" x1="0" y1="0" x2="1" y2="1"><stop offset="0" stop-color="#5391fe"/><stop offset="1" stop-color="#3762b9"/></linearGradient>
          <linearGradient id="drop" x1="0" y1="0" x2="1" y2="1"><stop offset=".3" stop-color="#35c6f4"/><stop offset="1" stop-color="#1460c0"/></linearGradient>
          <linearGradient id="pink" x1="0" y1="0" x2="1" y2="1"><stop offset="0" stop-color="#f2605a"/><stop offset="1" stop-color="#d83a92"/></linearGradient>
        </defs>${a.art}</svg>${a.state ? html`<i class="dot"></i>` : nothing}</div></div>`)}</div>
      <div class="tray">
        <svg width="16" height="10" viewBox="0 0 16 10"><path d="M1 9L8 2L15 9" fill="none" stroke="#1a1a1a" stroke-width="1.900"/></svg>
        <svg class="wifi" width="24" height="19" viewBox="0 0 24 19" fill="none" stroke="#1a1a1a" stroke-width="1.800"><path d="M.8 7A15.800 15.800 0 0 1 23.200 7M4.200 10.500A11 11 0 0 1 19.800 10.500M7.700 13.800A6.200 6.200 0 0 1 16.300 13.800"/><circle cx="12" cy="16" r="2" fill="#1a1a1a" stroke="none"/></svg>
        <svg class="vol" width="25" height="22" viewBox="0 0 25 22" fill="none" stroke="#1a1a1a" stroke-width="1.600"><path d="M1 7.500H5L10.500 3V19L5 14.500H1Z" stroke-linejoin="round"/><path d="M13.500 8Q15.500 11 13.500 14M16.500 5Q20.500 11 16.500 17M20 2Q26.500 11 20 20"/></svg>
        <svg class="bat" width="25" height="20" viewBox="0 0 25 20"><path d="M10 3.500H18.500Q21 3.500 21 6V15Q21 17.500 18.500 17.500H4Q1.500 17.500 1.500 15V13" fill="none" stroke="#1a1a1a" stroke-width="1.700"/><path d="M10 6H18.500V15H4L8 11ZM21.500 8Q24.500 8 24.500 10.500Q24.500 13 21.500 13ZM5.500 0L0 7H3L2 12L8 5H5Z" fill="#1a1a1a"/></svg>
        <div class="clock"><div>12:17 AM</div><div>1/8/2023</div></div>
        <div class="count">15</div>
      </div>
    </div>`;
  }
}

@customElement("app-root")
class AppRoot extends LitElement {
  static styles = css`:host{display:block;width:1920px;height:1080px;overflow:hidden;background:#fff}`;
  render() { return html`<browser-chrome></browser-chrome><validator-page></validator-page><task-bar></task-bar>`; }
}
